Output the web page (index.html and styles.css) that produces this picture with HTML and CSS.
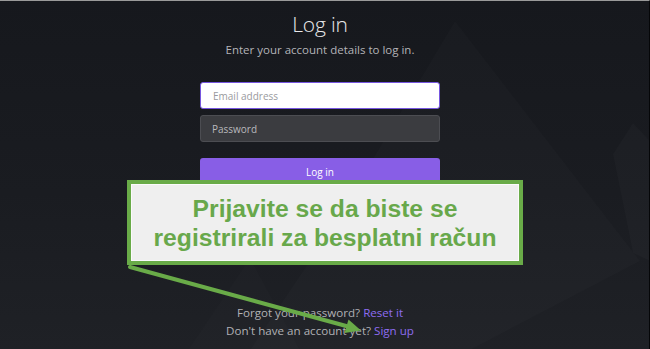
FILE: index.html
```html
<!DOCTYPE html>
<html lang="en">
<head>
<meta charset="utf-8">
<title>Log in</title>
<link rel="stylesheet" href="styles.css">
</head>
<body>
<main class="page">
  <svg class="bg-shapes" width="650" height="349" viewBox="0 0 650 349" aria-hidden="true">
    <polygon points="455,20 640,260 470,349 250,349 330,230" fill="#ffffff" fill-opacity="0.015"/>
    <polygon points="633,122 650,140 650,260 633,252 613,153" fill="#ffffff" fill-opacity="0.018"/>
    <polygon points="188,349 250,257 300,349" fill="#ffffff" fill-opacity="0.012"/>
  </svg>
  <section class="login">
    <h1 class="title">Log in</h1>
    <p class="subtitle">Enter your account details to log in.</p>
    <div class="field field-email">Email address</div>
    <div class="field field-password">Password</div>
    <div class="btn">Log in</div>
    <div class="footer">
      <p class="footer-line">Forgot your password? <span class="link">Reset it</span></p>
      <p class="footer-line">Don't have an account yet? <span class="link">Sign up</span></p>
    </div>
  </section>
  <div class="callout">
    <p class="callout-text">Prijavite se da biste se<br>registrirali za besplatni račun</p>
  </div>
  <svg class="arrow" width="650" height="349" viewBox="0 0 650 349" aria-hidden="true">
    <line x1="130" y1="266" x2="348" y2="325.5" stroke="#69ab48" stroke-width="4" stroke-linecap="round"/>
    <polygon points="361,329.5 344.5,332 348.5,318.5" fill="#69ab48"/>
  </svg>
</main>
</body>
</html>
```
FILE: styles.css
```css
html, body {
  margin: 0;
  padding: 0;
  background: #17191e;
}
.page {
  position: relative;
  width: 650px;
  height: 349px;
  overflow: hidden;
  box-sizing: border-box;
  border-top: 1px solid #9a9a9a;
  border-right: 1px solid #050608;
  background: linear-gradient(180deg, #16181d 0%, #1a1c21 55%, #1f2126 100%);
  font-family: "Open Sans", "Noto Sans", sans-serif;
}
.bg-shapes {
  position: absolute;
  left: 0;
  top: 0;
}
.login {
  position: relative;
  width: 240px;
  margin-left: 200px;
  padding-top: 9px;
  display: flex;
  flex-direction: column;
  align-items: stretch;
  text-align: center;
}
.title {
  margin: 0;
  font-size: 21px;
  line-height: 28px;
  font-weight: 300;
  color: #e8e8ea;
  letter-spacing: -0.2px;
}
.subtitle {
  margin: 4px -40px 0;
  font-size: 11.5px;
  line-height: 16px;
  color: #b4b4b8;
}
.field {
  box-sizing: border-box;
  height: 27px;
  border-radius: 3px;
  padding: 0 12px;
  font-size: 10px;
  line-height: 26px;
  text-align: left;
}
.field-email {
  margin-top: 24px;
  background: #ffffff;
  border: 1px solid #7656df;
  color: #9a9a9e;
}
.field-password {
  margin-top: 6px;
  background: #3b3c40;
  border: 1px solid #4c4d52;
  color: #b9b9bd;
  padding-left: 11px;
}
.btn {
  margin-top: 16px;
  height: 27px;
  border-radius: 3px;
  background: #885ee6;
  color: #ffffff;
  font-size: 10px;
  line-height: 28px;
}
.footer {
  margin-top: 119px;
  display: flex;
  flex-direction: column;
}
.footer-line {
  margin: 0 -60px;
  font-size: 11.6px;
  line-height: 18px;
  color: #b1b1b5;
}
.link {
  color: #8d6cf0;
}
.callout {
  position: absolute;
  left: 127px;
  top: 179px;
  width: 396px;
  height: 85px;
  box-sizing: border-box;
  border: 4px solid #69ab48;
  background: #efefef;
  box-shadow: inset 0 0 0 1px #fbfbfb;
  display: flex;
  align-items: center;
  justify-content: center;
}
.callout-text {
  margin: 1px 0 0;
  font-family: "Liberation Sans", Arial, sans-serif;
  font-weight: 700;
  font-size: 24.7px;
  line-height: 29px;
  color: #68a84b;
  text-align: center;
}
.arrow {
  position: absolute;
  left: 0;
  top: 0;
}
```
